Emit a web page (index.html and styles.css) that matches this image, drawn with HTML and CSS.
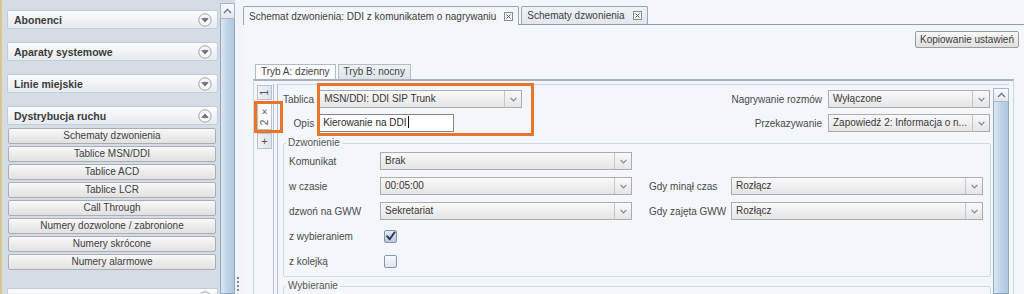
FILE: index.html
```html
<!DOCTYPE html>
<html lang="pl">
<head>
<meta charset="utf-8">
<title>Schemat dzwonienia</title>
<link rel="stylesheet" href="styles.css">
</head>
<body>
<div class="app">
  <aside class="sidebar">
    <nav class="side-list">
      <div class="acc-head"><span>Abonenci</span>
        <svg class="acc-ico" width="14" height="14" viewBox="0 0 14 14"><circle cx="7" cy="7" r="6.2" fill="#f5f5f5" stroke="#a3a3a3"/><path d="M3.8 5.6 Q7 4.8 10.2 5.6 L7 9 Z" fill="#707070" stroke="#707070" stroke-width="0.8" stroke-linejoin="round"/></svg>
      </div>
      <div class="acc-head"><span>Aparaty systemowe</span>
        <svg class="acc-ico" width="14" height="14" viewBox="0 0 14 14"><circle cx="7" cy="7" r="6.2" fill="#f5f5f5" stroke="#a3a3a3"/><path d="M3.8 5.6 Q7 4.8 10.2 5.6 L7 9 Z" fill="#707070" stroke="#707070" stroke-width="0.8" stroke-linejoin="round"/></svg>
      </div>
      <div class="acc-head"><span>Linie miejskie</span>
        <svg class="acc-ico" width="14" height="14" viewBox="0 0 14 14"><circle cx="7" cy="7" r="6.2" fill="#f5f5f5" stroke="#a3a3a3"/><path d="M3.8 5.6 Q7 4.8 10.2 5.6 L7 9 Z" fill="#707070" stroke="#707070" stroke-width="0.8" stroke-linejoin="round"/></svg>
      </div>
      <div class="acc-head open"><span>Dystrybucja ruchu</span>
        <svg class="acc-ico" width="14" height="14" viewBox="0 0 14 14"><circle cx="7" cy="7" r="6.2" fill="#f5f5f5" stroke="#a3a3a3"/><path d="M3.8 8.4 Q7 9.2 10.2 8.4 L7 5 Z" fill="#707070" stroke="#707070" stroke-width="0.8" stroke-linejoin="round"/></svg>
      </div>
      <div class="acc-items">
        <div class="acc-btn">Schematy dzwonienia</div>
        <div class="acc-btn">Tablice MSN/DDI</div>
        <div class="acc-btn">Tablice ACD</div>
        <div class="acc-btn">Tablice LCR</div>
        <div class="acc-btn">Call Through</div>
        <div class="acc-btn">Numery dozwolone / zabronione</div>
        <div class="acc-btn">Numery skrócone</div>
        <div class="acc-btn">Numery alarmowe</div>
      </div>
      <div class="acc-head"><span></span>
        <svg class="acc-ico" width="14" height="14" viewBox="0 0 14 14"><circle cx="7" cy="7" r="6.2" fill="#f5f5f5" stroke="#a3a3a3"/></svg>
      </div>
    </nav>
    <div class="vscroll side-scroll">
      <div class="sb-up"><svg width="9" height="6" viewBox="0 0 9 6"><path d="M1 5 L4.5 1.5 L8 5" fill="none" stroke="#6b7580" stroke-width="1.3"/></svg></div>
      <div class="sb-thumb"></div>
    </div>
  </aside>
  <div class="splitter"><span class="grip"></span></div>
  <main class="main">
    <div class="tabbar">
      <div class="tab active"><span>Schemat dzwonienia: DDI z komunikatem o nagrywaniu</span>
        <svg class="x-ico" width="9" height="9" viewBox="0 0 9 9"><rect x="0.5" y="0.5" width="8" height="8" fill="#f4f4f4" stroke="#8a8a8a"/><path d="M2.5 2.5 L6.5 6.5 M6.5 2.5 L2.5 6.5" stroke="#555" stroke-width="1"/></svg>
      </div>
      <div class="tab"><span>Schematy dzwonienia</span>
        <svg class="x-ico" width="9" height="9" viewBox="0 0 9 9"><rect x="0.5" y="0.5" width="8" height="8" fill="#f4f4f4" stroke="#8a8a8a"/><path d="M2.5 2.5 L6.5 6.5 M6.5 2.5 L2.5 6.5" stroke="#555" stroke-width="1"/></svg>
      </div>
    </div>
    <div class="toolbar"><button class="btn" type="button">Kopiowanie ustawień</button></div>
    <div class="mode-tabs">
      <div class="mtab active">Tryb A: dzienny</div>
      <div class="mtab">Tryb B: nocny</div>
    </div>
    <div class="mode-panel">
      <div class="vtabs">
        <div class="vtab t1"><span class="vtxt">1</span></div>
        <div class="vtab t2 active"><span class="vtxt">2 ×</span></div>
        <div class="vtab t3">+</div>
      </div>
      <div class="pane">
        <div class="pane-inner">
          <div class="pane-content">
            <div class="top">
              <div class="grp-left">
                <span class="lbl">Tablica</span>
                <div class="sel"><span class="sel-val">MSN/DDI: DDI SIP Trunk</span><span class="sel-btn"><svg width="7" height="5" viewBox="0 0 7 5"><path d="M0.6 0.8 L3.5 3.8 L6.4 0.8" fill="none" stroke="#7d8894" stroke-width="1.2"/></svg></span></div>
                <span class="lbl">Opis</span>
                <div class="inp">Kierowanie na DDI<span class="caret"></span></div>
              </div>
              <div class="grp-right">
                <span class="lbl">Nagrywanie rozmów</span>
                <div class="sel"><span class="sel-val">Wyłączone</span><span class="sel-btn"><svg width="7" height="5" viewBox="0 0 7 5"><path d="M0.6 0.8 L3.5 3.8 L6.4 0.8" fill="none" stroke="#7d8894" stroke-width="1.2"/></svg></span></div>
                <span class="lbl">Przekazywanie</span>
                <div class="sel"><span class="sel-val">Zapowiedź 2: Informacja o n...</span><span class="sel-btn"><svg width="7" height="5" viewBox="0 0 7 5"><path d="M0.6 0.8 L3.5 3.8 L6.4 0.8" fill="none" stroke="#7d8894" stroke-width="1.2"/></svg></span></div>
              </div>
            </div>
            <fieldset class="fs">
              <legend>Dzwonienie</legend>
              <div class="fs-grid">
                <span class="lbl">Komunikat</span>
                <div class="sel"><span class="sel-val">Brak</span><span class="sel-btn"><svg width="7" height="5" viewBox="0 0 7 5"><path d="M0.6 0.8 L3.5 3.8 L6.4 0.8" fill="none" stroke="#7d8894" stroke-width="1.2"/></svg></span></div>
                <span></span><span></span>

                <span class="lbl">w czasie</span>
                <div class="sel"><span class="sel-val">00:05:00</span><span class="sel-btn"><svg width="7" height="5" viewBox="0 0 7 5"><path d="M0.6 0.8 L3.5 3.8 L6.4 0.8" fill="none" stroke="#7d8894" stroke-width="1.2"/></svg></span></div>
                <span class="lbl lbl2">Gdy minął czas</span>
                <div class="sel"><span class="sel-val">Rozłącz</span><span class="sel-btn"><svg width="7" height="5" viewBox="0 0 7 5"><path d="M0.6 0.8 L3.5 3.8 L6.4 0.8" fill="none" stroke="#7d8894" stroke-width="1.2"/></svg></span></div>

                <span class="lbl">dzwoń na GWW</span>
                <div class="sel"><span class="sel-val">Sekretariat</span><span class="sel-btn"><svg width="7" height="5" viewBox="0 0 7 5"><path d="M0.6 0.8 L3.5 3.8 L6.4 0.8" fill="none" stroke="#7d8894" stroke-width="1.2"/></svg></span></div>
                <span class="lbl lbl2">Gdy zajęta GWW</span>
                <div class="sel"><span class="sel-val">Rozłącz</span><span class="sel-btn"><svg width="7" height="5" viewBox="0 0 7 5"><path d="M0.6 0.8 L3.5 3.8 L6.4 0.8" fill="none" stroke="#7d8894" stroke-width="1.2"/></svg></span></div>

                <span class="lbl">z wybieraniem</span>
                <span class="chk checked"><svg width="11" height="11" viewBox="0 0 11 11"><path d="M2.2 5.2 L4.6 8.2 L9.6 1.4" fill="none" stroke="#26395a" stroke-width="1.9" stroke-linecap="round" stroke-linejoin="round"/></svg></span>
                <span></span><span></span>

                <span class="lbl">z kolejką</span>
                <span class="chk"></span>
                <span></span><span></span>
              </div>
            </fieldset>
            <fieldset class="fs fs2">
              <legend>Wybieranie</legend>
            </fieldset>
          </div>
          <div class="vscroll pane-scroll">
            <div class="sb-up"><svg width="9" height="6" viewBox="0 0 9 6"><path d="M1 5 L4.5 1.5 L8 5" fill="none" stroke="#6b7580" stroke-width="1.3"/></svg></div>
            <div class="sb-thumb"></div>
          </div>
        </div>
      </div>
      <div class="hl hl-tab"></div>
      <div class="hl hl-fields"></div>
    </div>
  </main>
</div>
</body>
</html>
```

FILE: styles.css
```css
* { box-sizing: border-box; }
html, body { margin: 0; padding: 0; height: 100%; }
body {
  font-family: "Liberation Sans", Arial, sans-serif;
  font-size: 10px;
  color: #444;
  background: #f3f6fa;
  overflow: hidden;
}
.app { display: flex; height: 294px; overflow: hidden; }

/* ---------- sidebar ---------- */
.sidebar {
  flex: none;
  display: flex;
  width: 235px;
  background: #d4dce5;
  border-left: 2px solid #d8c58f;
}
.side-list {
  width: 218px;
  padding: 10px 2px 0 5px;
  display: flex;
  flex-direction: column;
  overflow: hidden;
}
.acc-head {
  flex: none;
  display: flex;
  align-items: center;
  justify-content: space-between;
  height: 19px;
  margin-bottom: 13px;
  padding: 0 5px 0 6px;
  border: 1px solid #c5ccd5;
  border-radius: 2px;
  background: linear-gradient(#fbfcfd, #e7eaee);
  font-weight: bold;
  font-size: 10.5px;
  color: #3a3a3a;
}
.acc-head.open { margin-bottom: 3px; }
.acc-ico { display: block; }
.acc-items {
  flex: none;
  display: flex;
  flex-direction: column;
  gap: 2px;
  margin: 0 2px 18px 1px;
}
.acc-btn {
  height: 16px;
  line-height: 14px;
  text-align: center;
  border: 1px solid #a9aeb4;
  border-radius: 2px;
  background: linear-gradient(#f8f8f8, #e1e1e1);
  color: #404040;
  white-space: nowrap;
}

/* ---------- scrollbars ---------- */
.vscroll {
  flex: none;
  display: flex;
  flex-direction: column;
}
.side-scroll { width: 15px; padding-top: 3px; }
.pane-scroll { width: 16px; padding-top: 3px; }
.sb-up {
  flex: none;
  height: 16px;
  border: 1px solid #a8b7c6;
  background: linear-gradient(#f8fafc, #e2e8ee);
  display: flex;
  align-items: center;
  justify-content: center;
}
.pane-scroll .sb-up { height: 14px; }
.sb-thumb {
  flex: 1;
  border: 1px solid #8ea6be;
  border-top: none;
  background: linear-gradient(90deg, #dde8f2, #c2d5e7 45%, #afc7dd);
}

/* ---------- splitter ---------- */
.splitter {
  flex: none;
  width: 8px;
  background: #f1f4f8;
  display: flex;
  flex-direction: column;
  justify-content: flex-end;
}
.grip {
  width: 2px;
  height: 14px;
  margin: 0 0 3px 2px;
  background: repeating-linear-gradient(#7b8897 0 2px, transparent 2px 4px);
}

/* ---------- main ---------- */
.main {
  flex: 1;
  min-width: 0;
  display: flex;
  flex-direction: column;
  background: #f3f6fa;
}
.tabbar {
  flex: none;
  height: 25px;
  display: flex;
  align-items: flex-end;
  gap: 2px;
  padding-top: 6px;
  border-bottom: 1px solid #8f9dad;
}
.tab {
  height: 18px;
  display: flex;
  align-items: center;
  gap: 8px;
  padding: 0 5px;
  border: 1px solid #98a6b5;
  border-bottom: none;
  border-radius: 2px 2px 0 0;
  background: linear-gradient(#eff2f6, #e2e7ed);
  color: #404040;
  white-space: nowrap;
}
.tab.active {
  height: 19px;
  margin-bottom: -1px;
  background: #f3f6fa;
}
.x-ico { display: block; flex: none; }

.toolbar {
  flex: none;
  display: flex;
  justify-content: flex-end;
  padding: 6px 5px 0 0;
}
.btn {
  height: 17px;
  padding: 0 4px;
  border: 1px solid #9c9c9c;
  border-radius: 2px;
  background: linear-gradient(#f8f8f8, #e0e0e0);
  font-family: inherit;
  font-size: 10px;
  color: #3a3a3a;
  line-height: 15px;
}

.mode-tabs {
  flex: none;
  display: flex;
  gap: 2px;
  margin-top: 16px;
  padding-left: 12px;
  height: 15px;
}
.mtab {
  height: 15px;
  line-height: 14px;
  padding: 0 5px;
  border: 1px solid #b3bcc6;
  border-bottom: none;
  background: linear-gradient(#eef1f4, #dde3e9);
  color: #444;
  white-space: nowrap;
}
.mtab.active { background: #fcfdfe; }

.mode-panel {
  flex: 1;
  min-height: 0;
  position: relative;
  display: flex;
  margin: 0 10px;
  padding: 3px 4px 0 3px;
  border-top: 2px solid #a7b1bc;
  border-left: 1px solid #d0d6dd;
  border-right: 1px solid #d0d6dd;
}

/* vertical tabs */
.vtabs {
  flex: none;
  width: 16px;
  display: flex;
  flex-direction: column;
  padding-top: 1px;
}
.vtab {
  width: 15px;
  display: flex;
  align-items: center;
  justify-content: center;
  border: 1px solid #b9c1cb;
  background: linear-gradient(90deg, #eef1f4, #dfe4ea);
  color: #555;
}
.vtab.t1 { height: 15px; }
.vtab.t2 { height: 28px; margin-top: 2px; }
.vtab.t3 { height: 16px; margin-top: 3px; font-size: 11px; }
.vtab.active { background: #f8fafc; }
.vtxt {
  writing-mode: vertical-rl;
  transform: rotate(180deg);
  line-height: 13px;
  white-space: nowrap;
}

/* pane */
.pane {
  flex: 1;
  min-width: 0;
  display: flex;
  padding-left: 3px;
  border-left: 1px solid #b6bec8;
}
.pane-inner {
  flex: 1;
  min-width: 0;
  display: flex;
  border-left: 1px solid #b6bec8;
  border-top: 1px solid #cdd4dc;
}
.pane-content {
  flex: 1;
  min-width: 0;
  overflow: hidden;
}

.top {
  display: flex;
  justify-content: space-between;
  padding: 5px 3px 0 5px;
}
.grp-left {
  display: grid;
  grid-template-columns: auto 203px;
  grid-auto-rows: 18px;
  column-gap: 5px;
  row-gap: 6px;
  align-items: center;
}
.grp-right {
  display: grid;
  grid-template-columns: auto 162px;
  grid-auto-rows: 18px;
  column-gap: 6px;
  row-gap: 6px;
  align-items: center;
}
.lbl { color: #4a4a4a; white-space: nowrap; }
.grp-left .lbl, .grp-right .lbl { text-align: right; }

.sel {
  display: flex;
  height: 18px;
  border: 1px solid #a9acb0;
  background: linear-gradient(#f9f9f9, #e5e5e5);
  color: #383838;
  min-width: 0;
}
.sel-val {
  flex: 1;
  min-width: 0;
  padding-left: 4px;
  line-height: 16px;
  white-space: nowrap;
  overflow: hidden;
}
.sel-btn {
  flex: none;
  width: 17px;
  border-left: 1px solid #c3c6ca;
  display: flex;
  align-items: center;
  justify-content: center;
}
.sel-btn svg { display: block; }

.inp {
  width: 135px;
  height: 18px;
  border: 1px solid #7f8891;
  background: #fff;
  padding-left: 3px;
  line-height: 16px;
  color: #2a2a2a;
  white-space: nowrap;
}
.caret {
  display: inline-block;
  width: 1px;
  height: 12px;
  margin-left: 1px;
  background: #111;
  vertical-align: -2px;
}

/* fieldsets */
.fs {
  margin: 5px 2px 0 5px;
  padding: 3px 7px 6px 5px;
  border: 1px solid #d3d9e0;
  border-radius: 2px;
  min-width: 0;
}
.fs legend {
  padding: 0 2px;
  margin-left: -3px;
  line-height: 12px;
  color: #555;
}
.fs2 { margin-top: 3px; padding-bottom: 20px; }
.fs-grid {
  display: grid;
  grid-template-columns: 91px 252px 99px 252px;
  grid-auto-rows: 18px;
  row-gap: 7px;
  align-items: center;
}
.lbl2 { padding-left: 17px; }

.chk {
  width: 13px;
  height: 13px;
  margin-left: 4px;
  border: 1px solid #8794a3;
  border-radius: 2px;
  background: linear-gradient(#fbfcfd, #dde3ea);
  display: flex;
  align-items: center;
  justify-content: center;
}
.chk.checked { background: linear-gradient(#e4ebf3, #b9c9da); }
.chk svg { display: block; }

/* orange highlight overlays */
.hl {
  position: absolute;
  border: 3px solid #e9742b;
  pointer-events: none;
}
.hl-tab { left: 0; top: 20px; width: 29px; height: 32px; }
.hl-fields { left: 63px; top: 2px; width: 217px; height: 53px; }
```
